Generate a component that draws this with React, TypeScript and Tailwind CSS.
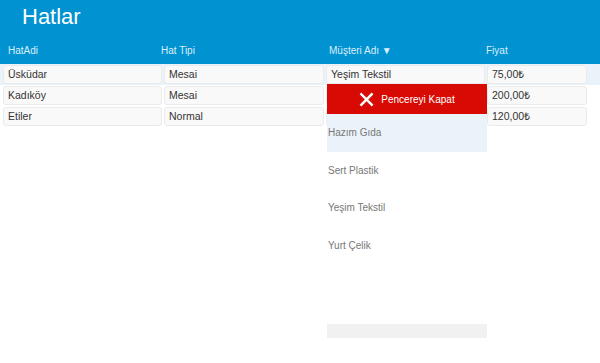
import React from 'react';

interface Hat {
  ad: string;
  tip: string;
  musteri: string;
  fiyat: string;
}

const hatlar: Hat[] = [
  { ad: 'Üsküdar', tip: 'Mesai', musteri: 'Yeşim Tekstil', fiyat: '75,00₺' },
  { ad: 'Kadıköy', tip: 'Mesai', musteri: '', fiyat: '200,00₺' },
  { ad: 'Etiler', tip: 'Normal', musteri: '', fiyat: '120,00₺' },
];

const musteriler = ['Hazım Gıda', 'Sert Plastik', 'Yeşim Tekstil', 'Yurt Çelik'];

const cell = 'h-[19px] flex items-center px-[4px] bg-[#f9f9f9] border border-[#ebebeb] rounded-[3px] text-[#333] text-[10.5px] truncate';

const App: React.FC = () => {
  return (
    <div className="relative w-[600px] h-[363px] bg-white overflow-hidden text-[10px]" style={{ fontFamily: '"Liberation Sans", Arial, sans-serif' }}>
      <div className="h-[64px] bg-[#0192d1] flex flex-col">
        <h1 className="text-[22px] leading-none text-white pl-[22px] pt-[6px]">Hatlar</h1>
        <div className="grid grid-cols-[153px_168px_157px_100px] mt-[15px] pl-[8px] text-[#dceffa]">
          <div>HatAdi</div>
          <div>Hat Tipi</div>
          <div>Müşteri Adı ▼</div>
          <div>Fiyat</div>
        </div>
      </div>

      <div className="flex flex-col">
        {hatlar.map((h, i) => (
          <div key={h.ad} className={`grid grid-cols-[159px_160px_159px_100px] gap-[2px] pl-[3px] py-[1px] ${i === 0 ? 'bg-[#eaf2fa]' : ''}`}>
            <div className={cell}>{h.ad}</div>
            <div className={cell}>{h.tip}</div>
            <div className={cell}>{h.musteri}</div>
            <div className={cell}>{h.fiyat}</div>
          </div>
        ))}
      </div>

      {/* acilir musteri listesi */}
      <div className="absolute left-[327px] top-[84px] w-[160px] bg-white">
        <button className="w-full h-[30px] bg-[#d80a04] text-white text-[10px] flex items-center justify-center gap-[7px]">
          <svg width="15" height="15" viewBox="0 0 16 16">
            <path d="M2.5 2.5 L13.5 13.5 M13.5 2.5 L2.5 13.5" stroke="white" strokeWidth="2.6" strokeLinecap="square" />
          </svg>
          Pencereyi Kapat
        </button>
        <div className="flex flex-col">
          {musteriler.map((m, i) => (
            <div key={m} className={`h-[37.5px] flex items-center pl-[1px] text-[#777] ${i === 0 ? 'bg-[#eaf2fa]' : ''}`}>
              {m}
            </div>
          ))}
        </div>
        <div className="h-[60px]" />
        <div className="h-[14px] bg-[#f1f1f1]" />
      </div>
    </div>
  );
};

export default App;
